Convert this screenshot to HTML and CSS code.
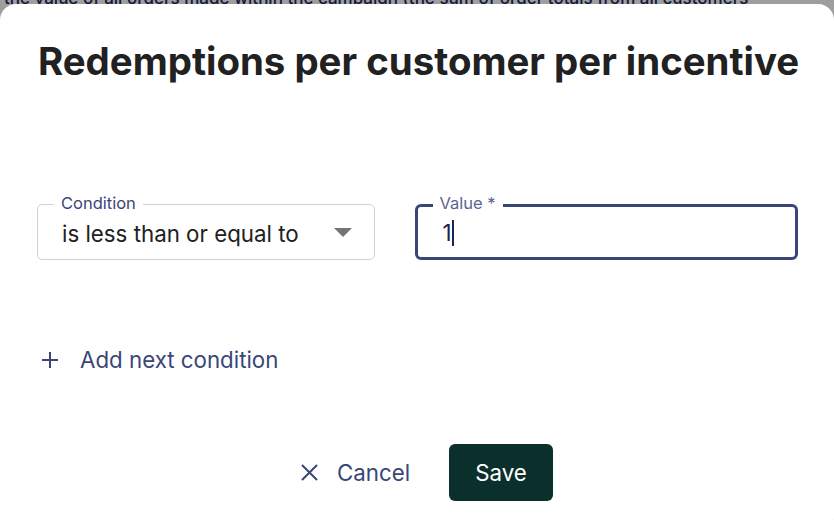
FILE: index.html
```html
<!DOCTYPE html>
<html>
<head>
<meta charset="utf-8">
<link rel="stylesheet" href="styles.css">
</head>
<body>
<div class="page">
  <p class="behind">the value of all orders made within the campaign (the sum of order totals from all customers</p>
  <div class="scrim"></div>
  <div class="dialog">
    <h1 class="title">Redemptions per customer per incentive</h1>
    <div class="fields">
      <div class="field field-select">
        <span class="label">Condition</span>
        <span class="value">is less than or equal to</span>
        <svg class="caret" width="18" height="9" viewBox="0 0 18 9"><path d="M0 0h18L9 9z" fill="#757575"/></svg>
      </div>
      <div class="field field-input">
        <span class="label">Value *</span>
        <span class="value">1<span class="cursor"></span></span>
      </div>
    </div>
    <div class="add">
      <svg class="icon" width="16" height="16" viewBox="0 0 16 16"><path d="M8 0v16M0 8h16" stroke="#3a4677" stroke-width="2"/></svg>
      <span>Add next condition</span>
    </div>
    <div class="actions">
      <button class="btn-cancel">
        <svg class="icon" width="17" height="17" viewBox="0 0 17 17"><path d="M1 1l15 15M16 1L1 16" stroke="#3a4677" stroke-width="2"/></svg>
        <span>Cancel</span>
      </button>
      <button class="btn-save">Save</button>
    </div>
  </div>
</div>
</body>
</html>
```
FILE: styles.css
```css
html, body {
  margin: 0;
  padding: 0;
}
body {
  font-family: Inter, "Noto Sans", sans-serif;
  background: #ffffff;
  width: 834px;
  height: 520px;
  overflow: hidden;
}
.page {
  position: relative;
  width: 834px;
  height: 520px;
  overflow: hidden;
  background: #ffffff;
  padding-top: 4px;
  box-sizing: border-box;
}
.behind {
  position: absolute;
  left: 4px;
  top: -12px;
  margin: 0;
  font-size: 17px;
  font-weight: 500;
  color: #1e2a5e;
  white-space: nowrap;
}
.scrim {
  position: absolute;
  inset: 0;
  background: rgba(0, 0, 0, 0.38);
}
.dialog {
  position: relative;
  background: #ffffff;
  border-radius: 16px;
  height: 530px;
  padding: 32px 36px 0 38px;
  box-sizing: border-box;
}
.title {
  margin: 0;
  font-size: 38.4px;
  font-weight: 700;
  color: #212121;
  line-height: 50px;
  white-space: nowrap;
}
.fields {
  display: flex;
  gap: 40px;
  margin-top: 118px;
  margin-left: -1px;
}
.field {
  position: relative;
  height: 56px;
  box-sizing: border-box;
  display: flex;
  align-items: center;
  padding: 0 24px;
}
.field-select {
  width: 338px;
  border: 1px solid #cfd1dc;
  border-radius: 5px;
}
.field-input {
  width: 384px;
  border: 3px solid #3a4677;
  border-radius: 6px;
  padding-left: 25px;
}
.label {
  position: absolute;
  top: -11px;
  left: 16px;
  padding: 0 7px;
  background: #ffffff;
  font-size: 16.5px;
  line-height: 19px;
  color: #3a4677;
}
.field-input .label {
  left: 15px;
  top: -13px;
  color: #5b6690;
}
.value {
  font-size: 22.3px;
  color: #212121;
  display: flex;
  align-items: center;
  padding-top: 3px;
}
.field-input .value {
  color: #1c2550;
  padding-top: 1px;
}
.cursor {
  display: inline-block;
  width: 2px;
  height: 26px;
  background: #1c2550;
  margin-left: 0;
}
.caret {
  margin-left: auto;
  margin-right: -2px;
}
.add {
  display: flex;
  align-items: center;
  gap: 22px;
  margin-top: 86px;
  margin-left: 4px;
  font-size: 22.3px;
  color: #3a4677;
}
.actions {
  display: flex;
  justify-content: center;
  align-items: center;
  gap: 39px;
  margin-top: 71px;
  padding-left: 18px;
}
.btn-cancel {
  display: flex;
  align-items: center;
  gap: 19px;
  background: none;
  border: none;
  font-family: inherit;
  font-size: 22.3px;
  color: #3a4677;
  padding: 0;
}
.btn-save {
  width: 104px;
  height: 57px;
  background: #0b302c;
  border: none;
  border-radius: 6px;
  color: #ffffff;
  font-family: inherit;
  font-size: 22.3px;
}
```
